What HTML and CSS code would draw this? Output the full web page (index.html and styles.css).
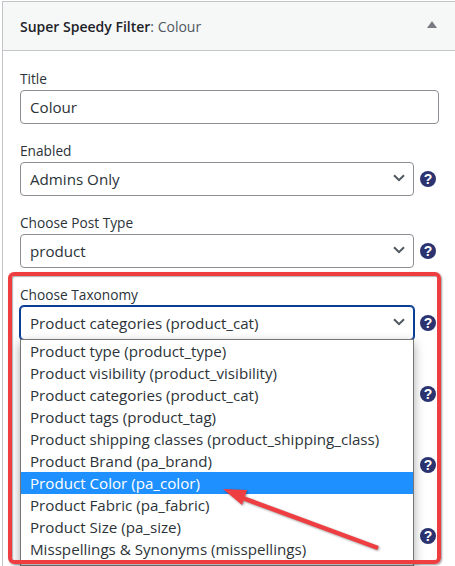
FILE: index.html
```html
<!DOCTYPE html>
<html lang="en">
<head>
    <meta charset="UTF-8">
    <meta name="viewport" content="width=device-width, initial-scale=1.0">
    <title>Super Speedy Filter: Colour</title>
    <link rel="stylesheet" href="styles.css">
</head>
<body>
    <div class="widget">
        <div class="widget-top">
            <h3 class="widget-title">Super Speedy Filter<span class="widget-name">: Colour</span></h3>
            <span class="widget-toggle"></span>
        </div>
        <div class="widget-body">
            <div class="field">
                <label class="field-label">Title</label>
                <div class="text-input">Colour</div>
            </div>
            <div class="field">
                <label class="field-label">Enabled</label>
                <div class="field-row">
                    <div class="select">Admins Only
                        <svg class="chevron" width="12" height="8" viewBox="0 0 12 8"><path d="M1 1.2l5 5 5-5" /></svg>
                    </div>
                    <span class="help">?</span>
                </div>
            </div>
            <div class="field">
                <label class="field-label">Choose Post Type</label>
                <div class="field-row">
                    <div class="select">product
                        <svg class="chevron" width="12" height="8" viewBox="0 0 12 8"><path d="M1 1.2l5 5 5-5" /></svg>
                    </div>
                    <span class="help">?</span>
                </div>
            </div>
            <div class="field taxonomy">
                <label class="field-label">Choose Taxonomy</label>
                <div class="field-row">
                    <div class="select focused">Product categories (product_cat)
                        <svg class="chevron" width="12" height="8" viewBox="0 0 12 8"><path d="M1 1.2l5 5 5-5" /></svg>
                    </div>
                    <span class="help">?</span>
                </div>
                <ul class="dropdown">
                    <li>Product type (product_type)</li>
                    <li>Product visibility (product_visibility)</li>
                    <li>Product categories (product_cat)</li>
                    <li>Product tags (product_tag)</li>
                    <li>Product shipping classes (product_shipping_class)</li>
                    <li>Product Brand (pa_brand)</li>
                    <li class="selected">Product Color (pa_color)</li>
                    <li>Product Fabric (pa_fabric)</li>
                    <li>Product Size (pa_size)</li>
                    <li>Misspellings &amp; Synonyms (misspellings)</li>
                </ul>
            </div>
            <!-- help icons of the fields hidden behind the open dropdown -->
            <div class="hidden-help">
                <span class="help">?</span>
                <span class="help">?</span>
                <span class="help">?</span>
            </div>
        </div>
    </div>

    <!-- red annotation drawn over the screenshot -->
    <div class="note-box"></div>
    <svg class="note-arrow" width="455" height="566" viewBox="0 0 455 566">
        <path d="M378 548L240 497" />
        <polygon points="223,489 247,490 242,505" />
    </svg>
</body>
</html>
```

FILE: styles.css
```css
* {
    margin: 0;
    padding: 0;
    box-sizing: border-box;
    font-family: 'Open Sans', 'Noto Sans', sans-serif;
}

html, body {
    height: 566px;
    overflow: hidden;
}

body {
    background: white;
    color: #2c3338;
    font-size: 14px;
}

.widget {
    margin: 1px 0 0 2px;
    height: 565px;
    border-top: 1px solid #c3c4c7;
    border-left: 1px solid #c3c4c7;
}

.widget-top {
    height: 49px;
    background: #f6f7f7;
    border-bottom: 1px solid #c3c4c7;
    display: flex;
    align-items: center;
    padding: 0 18px 0 17px;
    justify-content: space-between;
}

.widget-title {
    font-size: 14px;
    font-weight: 600;
    color: #1d2327;
}

.widget-name {
    font-weight: 400;
    color: #50575e;
}

.widget-toggle {
    width: 0;
    height: 0;
    border-left: 5px solid transparent;
    border-right: 5px solid transparent;
    border-bottom: 7px solid #787c82;
    margin-bottom: 3px;
}

.widget-body {
    padding: 19px 0 0 17px;
    width: 433px;
}

.field {
    margin-bottom: 18px;
}

.field-label {
    display: block;
    height: 20px;
    line-height: 18px;
    font-size: 13.7px;
}

.text-input,
.select {
    height: 34px;
    line-height: 33px;
    border: 1px solid #8c8f94;
    border-radius: 4px;
    padding-left: 9px;
    background: white;
    font-size: 15.15px;
}

.text-input {
    width: 419px;
}

.field-row {
    display: flex;
    align-items: center;
    gap: 6px;
}

.select {
    width: 394px;
    position: relative;
}

.select.focused {
    border-color: #0a3f94;
    box-shadow: 0 0 0 1px #0a3f94;
}

.chevron {
    position: absolute;
    right: 8px;
    top: 11px;
    fill: none;
    stroke: #50575e;
    stroke-width: 2;
}

.help {
    width: 16px;
    height: 16px;
    border-radius: 50%;
    background: #2b3470;
    color: white;
    font-family: 'Liberation Sans', sans-serif;
    font-size: 14px;
    font-weight: 700;
    line-height: 16px;
    text-align: center;
}

.taxonomy {
    position: relative;
}

.dropdown {
    position: absolute;
    z-index: 2;
    left: 0;
    top: 53px;
    width: 394px;
    height: 227px;
    list-style: none;
    background: white;
    border: 1px solid #767676;
    box-shadow: 0 4px 10px rgba(0, 0, 0, 0.35);
}

.dropdown li {
    height: 22px;
    line-height: 22px;
    padding-left: 9px;
    font-size: 15.15px;
    white-space: nowrap;
}

.dropdown li.selected {
    background: #1e90ff;
    color: white;
}

.hidden-help {
    display: flex;
    flex-direction: column;
    gap: 55px;
    align-items: flex-end;
    margin-top: 46px;
}

.note-box {
    position: absolute;
    left: 8px;
    top: 272px;
    width: 433px;
    height: 292px;
    border: 4px solid #ef3e42;
    border-radius: 6px;
    box-shadow: 1px 1px 2px rgba(0, 0, 0, 0.4), inset 1px 1px 1px rgba(0, 0, 0, 0.3);
    z-index: 3;
}

.note-arrow {
    position: absolute;
    left: 0;
    top: 0;
    z-index: 4;
    filter: drop-shadow(1px 1px 1px rgba(0, 0, 0, 0.4));
}

.note-arrow path {
    fill: none;
    stroke: #ef3e42;
    stroke-width: 4.5;
}

.note-arrow polygon {
    fill: #ef3e42;
}
```
